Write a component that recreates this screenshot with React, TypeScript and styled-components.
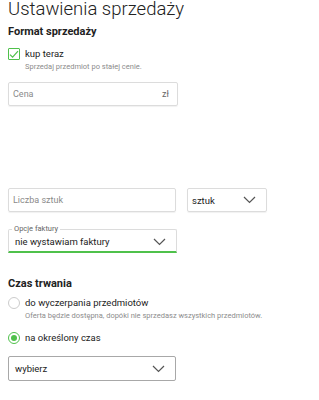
import React from 'react';
import styled, { createGlobalStyle } from 'styled-components';

const GREEN = '#4fc14b';

const GlobalStyle = createGlobalStyle`
  html, body {
    margin: 0;
    padding: 0;
    background: #fff;
  }
  body {
    font-family: Roboto, 'Liberation Sans', sans-serif;
    color: #222;
  }
`;

const Chevron: React.FC = () => (
  <svg width="13" height="8" viewBox="0 0 13 8" fill="none">
    <path d="M1 1l5.5 5.5L12 1" stroke="#555" strokeWidth="1.2" />
  </svg>
);

const App: React.FC = () => {
  return (
    <Page>
      <GlobalStyle />
      <Title>Ustawienia sprzedaży</Title>

      <SectionTitle top={5}>Format sprzedaży</SectionTitle>
      <OptionRow top={9}>
        <CheckBox>
          <svg width="10" height="9" viewBox="0 0 10 9" fill="none">
            <path d="M1 4.6l2.6 2.6L9 1.2" stroke={GREEN} strokeWidth="1.2" />
          </svg>
        </CheckBox>
        <OptionLabel>kup teraz</OptionLabel>
      </OptionRow>
      <Hint>Sprzedaj przedmiot po stałej cenie.</Hint>

      <Input width={170} top={10}>
        <Placeholder>Cena</Placeholder>
        <Suffix>zł</Suffix>
      </Input>

      <Row>
        <Input width={168} top={0}>
          <Placeholder>Liczba sztuk</Placeholder>
        </Input>
        <Input width={80} top={0}>
          <Value>sztuk</Value>
          <Chevron />
        </Input>
      </Row>

      <Fieldset>
        <Legend>Opcje faktury</Legend>
        <Value>nie wystawiam faktury</Value>
        <Chevron />
      </Fieldset>

      <SectionTitle top={24}>Czas trwania</SectionTitle>
      <OptionRow top={6}>
        <Radio checked={false} />
        <OptionLabel>do wyczerpania przedmiotów</OptionLabel>
      </OptionRow>
      <Hint>Oferta będzie dostępna, dopóki nie sprzedasz wszystkich przedmiotów.</Hint>
      <OptionRow top={11}>
        <Radio checked />
        <OptionLabel>na określony czas</OptionLabel>
      </OptionRow>

      <SelectBox>
        <Value>wybierz</Value>
        <Chevron />
      </SelectBox>
    </Page>
  );
};

export default App;

// Styles
const Page = styled.div`
  width: 319px;
  height: 400px;
  overflow: hidden;
  padding: 0 8px;
  box-sizing: border-box;
`;

const Title = styled.h1`
  margin: -2px 0 0;
  font-size: 18.5px;
  font-weight: 300;
  line-height: 22px;
  color: #222;
`;

const SectionTitle = styled.h2<{ top: number }>`
  margin: ${(p) => p.top}px 0 0;
  font-size: 11px;
  font-weight: 700;
  line-height: 14px;
  color: #222;
`;

const OptionRow = styled.div<{ top: number }>`
  display: flex;
  align-items: center;
  gap: 5px;
  margin-top: ${(p) => p.top}px;
  height: 12px;
`;

const CheckBox = styled.span`
  width: 12px;
  height: 12px;
  box-sizing: border-box;
  border: 1px solid ${GREEN};
  border-radius: 1px;
  display: flex;
  align-items: center;
  justify-content: center;
`;

const Radio = styled.span<{ checked: boolean }>`
  width: 12px;
  height: 12px;
  box-sizing: border-box;
  border-radius: 50%;
  border: 1px solid ${(p) => (p.checked ? GREEN : '#ccc')};
  display: flex;
  align-items: center;
  justify-content: center;
  &::after {
    content: '';
    display: ${(p) => (p.checked ? 'block' : 'none')};
    width: 6px;
    height: 6px;
    border-radius: 50%;
    background: ${GREEN};
  }
`;

const OptionLabel = styled.span`
  font-size: 9.5px;
  line-height: 12px;
  color: #222;
`;

const Hint = styled.div`
  margin: 2px 0 0 17px;
  font-size: 7.5px;
  line-height: 10px;
  color: #8c8c8c;
`;

const Row = styled.div`
  display: flex;
  gap: 11px;
  margin-top: 82px;
`;

const Input = styled.div<{ width: number; top: number }>`
  width: ${(p) => p.width}px;
  height: 24px;
  margin-top: ${(p) => p.top}px;
  box-sizing: border-box;
  border: 1px solid #dcdcdc;
  border-radius: 2px;
  box-shadow: 0 1px 1px rgba(0, 0, 0, 0.06);
  display: flex;
  align-items: center;
  justify-content: space-between;
  padding: 0 10px 0 4px;
`;

const Placeholder = styled.span`
  font-size: 9px;
  color: #8a8a8a;
`;

const Suffix = styled.span`
  font-size: 9px;
  color: #666;
  margin-right: -2px;
`;

const Value = styled.span`
  font-size: 9.5px;
  color: #222;
`;

const Fieldset = styled.div`
  position: relative;
  width: 169px;
  height: 24px;
  margin-top: 17px;
  box-sizing: border-box;
  border: 1px solid #dcdcdc;
  border-bottom: 2px solid ${GREEN};
  border-radius: 2px 2px 0 0;
  display: flex;
  align-items: center;
  justify-content: space-between;
  padding: 2px 10px 0 6px;
`;

const Legend = styled.span`
  position: absolute;
  top: -6px;
  left: 3px;
  padding: 0 2px;
  background: #fff;
  font-size: 7.5px;
  line-height: 10px;
  color: #666;
`;

const SelectBox = styled.div`
  width: 168px;
  height: 25px;
  margin-top: 12px;
  box-sizing: border-box;
  border: 1px solid #a8a8a8;
  border-radius: 2px;
  display: flex;
  align-items: center;
  justify-content: space-between;
  padding: 0 10px 0 6px;
`;
